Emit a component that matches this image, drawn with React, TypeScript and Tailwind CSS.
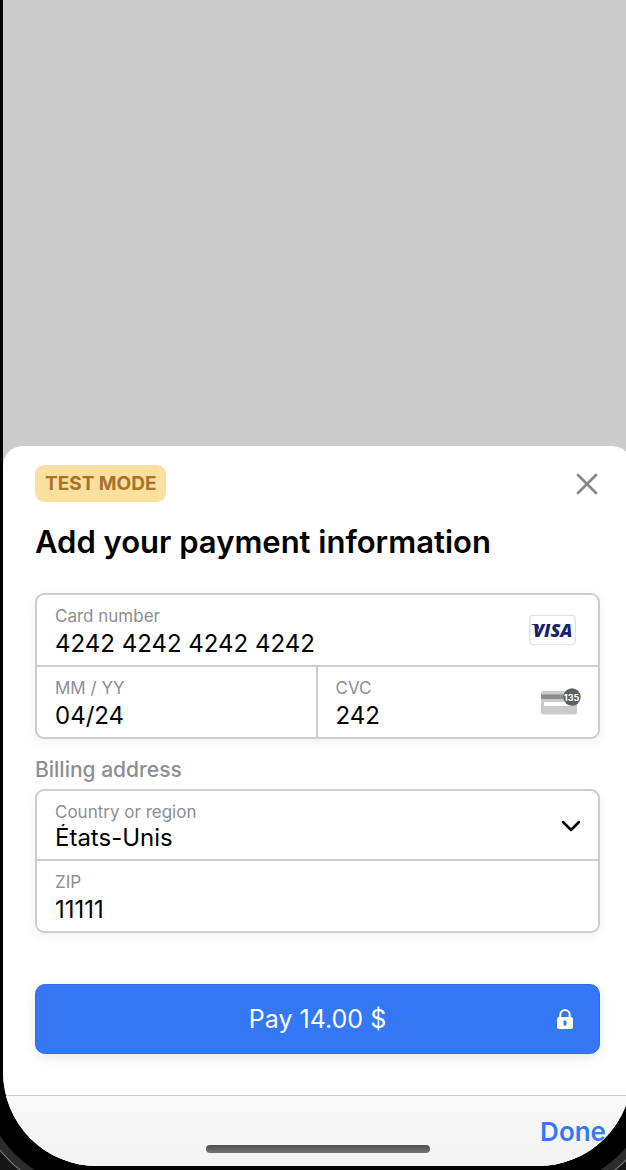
import { useState } from "react";
import type { InputHTMLAttributes } from "react";

const labelClass = "block text-[17px] leading-6 text-[#8e8e92]";
const valueClass =
  "block h-7 w-full min-w-0 appearance-none bg-transparent p-0 text-[24px] leading-7 text-black outline-none";

type FieldProps = InputHTMLAttributes<HTMLInputElement> & {
  id: string;
  label: string;
};

function Field({ id, label, ...rest }: FieldProps) {
  return (
    <div className="flex min-w-0 flex-1 flex-col gap-0.5 pt-[9px] pb-[7px] pl-[18px]">
      <label htmlFor={id} className={labelClass}>
        {label}
      </label>
      <input id={id} className={valueClass} {...rest} />
    </div>
  );
}

function VisaMark() {
  return (
    <svg width="47" height="32" viewBox="0 0 47 32" role="img" aria-label="Visa">
      <rect x="0.75" y="1.25" width="45.5" height="29.5" rx="4" fill="#fff" stroke="#dcdce0" strokeWidth="1.2" />
      <path d="M2.500 10h5.200c1 0 1.500.4 1.700 1.300l1.200 5.400C9.100 13.400 6.500 11.300 2.500 10.500z" fill="#1a1f71" />
      <text
        x="4"
        y="22.800"
        fill="#1a1f71"
        fontFamily="'Open Sans', sans-serif"
        fontSize="18"
        fontWeight="800"
        fontStyle="italic"
      >
        VISA
      </text>
    </svg>
  );
}

function CvcMark() {
  return (
    <svg width="40" height="28" viewBox="0 0 40 28" aria-hidden="true">
      <rect x="0" y="3" width="36" height="23.500" rx="2.500" fill="#cacaca" />
      <rect x="0" y="6.500" width="36" height="4.500" fill="#8c8c8c" />
      <rect x="3" y="14" width="28" height="4" fill="#fff" />
      <circle cx="31" cy="9" r="8.700" fill="#606060" />
      <text
        x="30.600"
        y="12.500"
        textAnchor="middle"
        fill="#fff"
        fontFamily="Inter, sans-serif"
        fontSize="9"
        fontWeight="700"
      >
        135
      </text>
    </svg>
  );
}

export default function App() {
  const [card, setCard] = useState("4242 4242 4242 4242");
  const [expiry, setExpiry] = useState("04/24");
  const [cvc, setCvc] = useState("242");
  const [zip, setZip] = useState("11111");
  const [country, setCountry] = useState("US");

  const boxClass =
    "rounded-[9px] border-2 border-[#cdcdd1] bg-white shadow-[0_3px_12px_rgba(0,0,0,0.06)]";

  return (
    <div className="flex min-h-screen flex-col overflow-hidden bg-[#161616] pb-1 pl-[3px] font-['Inter',sans-serif]">
      <div className="relative -mr-1.5 flex flex-1 flex-col overflow-hidden rounded-b-[94px] bg-[#cccccc] shadow-[0_0_0_22px_#000,0_0_0_30px_#2c2c2c,0_0_0_31px_#858585]">
        <div className="flex-1" />
        <main className="rounded-t-[20px] bg-white">
          <form className="px-8 pt-[19px] pb-[41px]" onSubmit={(e) => e.preventDefault()}>
            <div className="flex items-center justify-between">
              <span className="flex h-[37px] items-center rounded-[9px] bg-[#fbdf9f] px-2.5 pt-0.5 text-[19px] font-bold text-[#a5732a]">
                TEST MODE
              </span>
              <button type="button" aria-label="Close" className="p-0">
                <svg width="26" height="26" viewBox="0 0 26 26" fill="none" stroke="#88888b" strokeWidth="2.800" strokeLinecap="round">
                  <path d="M4 4l18 18M22 4L4 22" />
                </svg>
              </button>
            </div>

            <h1 className="mt-5 text-[31px] leading-10 font-semibold text-black">
              Add your payment information
            </h1>

            <div className={`mt-[31px] ${boxClass}`}>
              <div className="flex items-center border-b-2 border-[#cdcdd1] pr-[22px]">
                <Field id="card" label="Card number" inputMode="numeric" value={card} onChange={(e) => setCard(e.target.value)} />
                <VisaMark />
              </div>
              <div className="grid grid-cols-2">
                <div className="flex border-r-2 border-[#cdcdd1]">
                  <Field id="expiry" label="MM / YY" inputMode="numeric" value={expiry} onChange={(e) => setExpiry(e.target.value)} />
                </div>
                <div className="flex items-center pr-[17px]">
                  <Field id="cvc" label="CVC" inputMode="numeric" value={cvc} onChange={(e) => setCvc(e.target.value)} />
                  <CvcMark />
                </div>
              </div>
            </div>

            <h2 className="mt-[17px] mb-[5px] text-[21px] leading-7 font-medium text-[#8e8e92]">Billing address</h2>

            <div className={boxClass}>
              <div className="flex items-center border-b-2 border-[#cdcdd1] pt-[9px] pr-[17px] pb-[7px] pl-[18px]">
                <div className="min-w-0 flex-1">
                  <label htmlFor="country" className={labelClass}>
                    Country or region
                  </label>
                  <select id="country" className={valueClass} value={country} onChange={(e) => setCountry(e.target.value)}>
                    <option value="US">États-Unis</option>
                  </select>
                </div>
                <svg width="20" height="12" viewBox="0 0 20 12" fill="none" stroke="#000" strokeWidth="2.500" strokeLinecap="round" strokeLinejoin="round" aria-hidden="true">
                  <path d="M2 2l8 8 8-8" />
                </svg>
              </div>
              <div className="flex">
                <Field id="zip" label="ZIP" inputMode="numeric" value={zip} onChange={(e) => setZip(e.target.value)} />
              </div>
            </div>

            <button
              type="submit"
              className="mt-[51px] grid h-[70px] w-full grid-cols-[1fr_auto_1fr] items-center rounded-[10px] border border-[#2f6fe0] bg-[#3478f6] px-[26px] text-[25px] text-white shadow-[0_3px_12px_rgba(0,0,0,0.1)]"
            >
              <span className="col-start-2 pt-0.5">Pay 14.00 $</span>
              <svg className="justify-self-end" width="16" height="20" viewBox="0 0 16 20" aria-hidden="true">
                <path d="M3.300 9V5.700a4.700 4.700 0 0 1 9.400 0V9" fill="none" stroke="#fff" strokeWidth="2" />
                <path fillRule="evenodd" fill="#fff" d="M2 8h12a2 2 0 0 1 2 2v8a2 2 0 0 1-2 2H2a2 2 0 0 1-2-2v-8a2 2 0 0 1 2-2zM8 11.200a1.500 1.500 0 0 0-1.500 1.500v2.600a1.500 1.500 0 0 0 3 0v-2.600A1.500 1.500 0 0 0 8 11.200z" />
              </svg>
            </button>
          </form>

          <div className="flex h-[71px] items-center justify-end border-t border-[#cbcbcc] bg-linear-to-b from-[#f9f9f9] to-[#f3f3f3] pr-[26px]">
            <button type="button" className="text-[26px] font-semibold text-[#3478f6]">
              Done
            </button>
          </div>
        </main>
        <div className="absolute bottom-[13px] left-1/2 h-2 w-56 -translate-x-1/2 rounded-full bg-linear-to-b from-[#505050] to-[#747474]" />
      </div>
    </div>
  );
}
